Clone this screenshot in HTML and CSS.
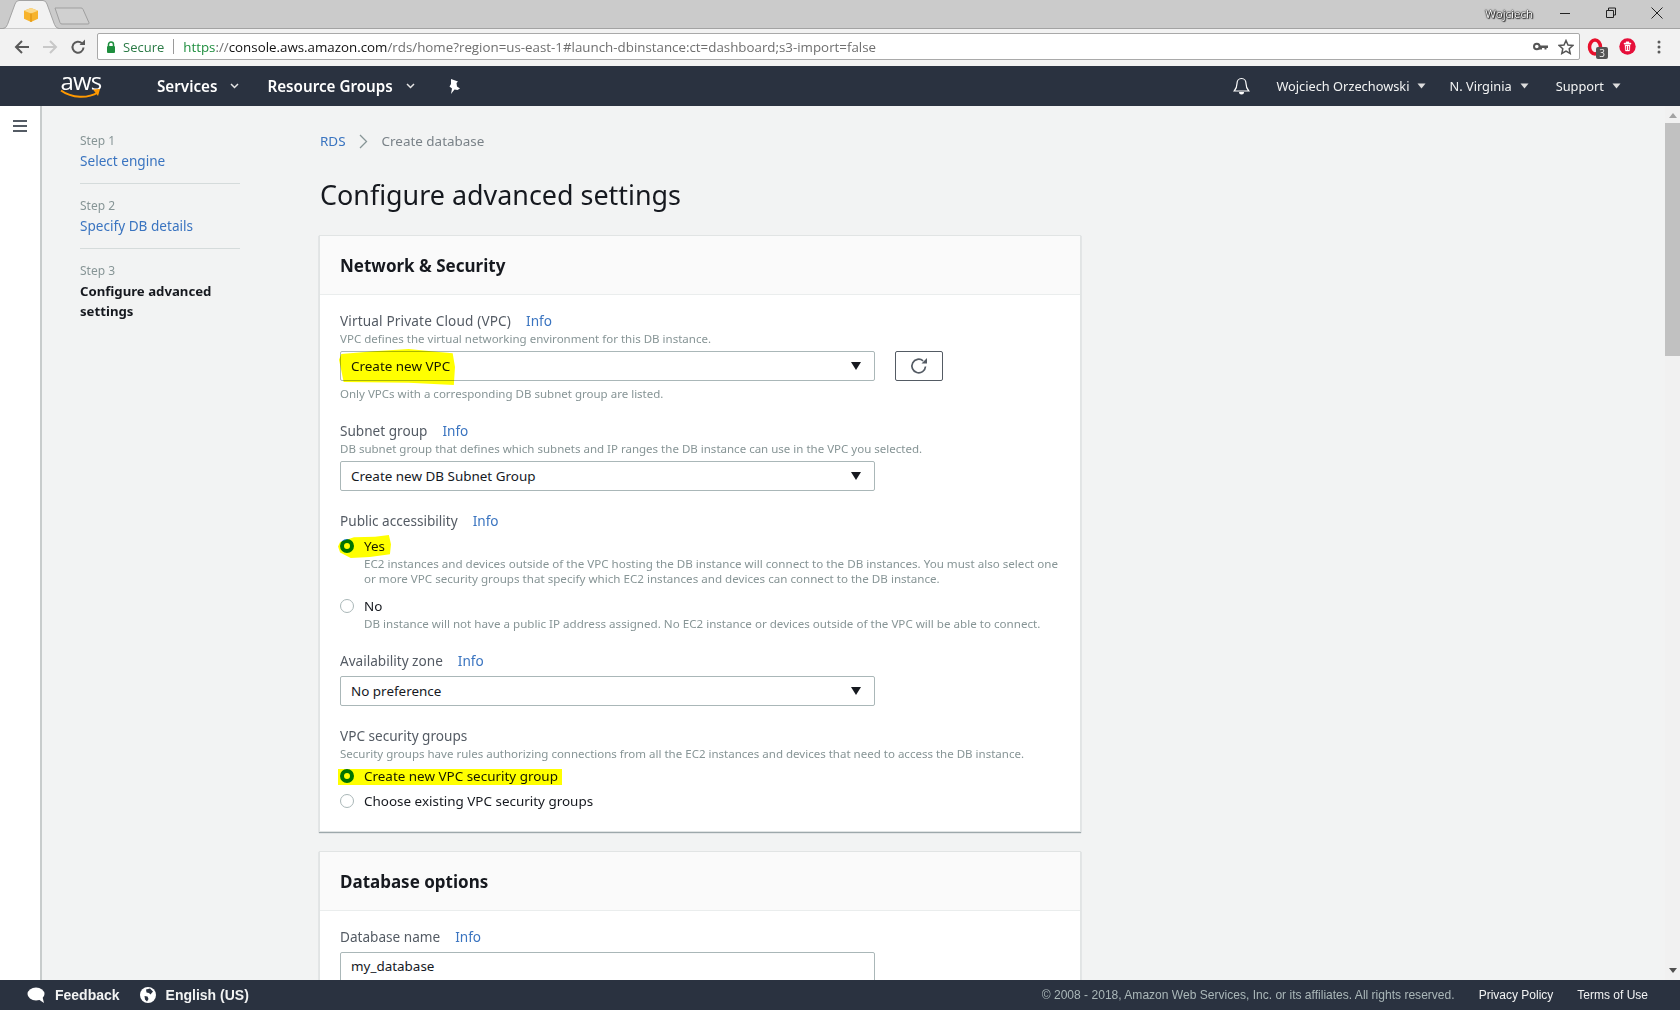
FILE: index.html
```html
<!DOCTYPE html>
<html lang="en">
<head>
<meta charset="utf-8">
<title>Configure advanced settings</title>
<link rel="stylesheet" href="styles.css">
</head>
<body>
<div class="app">
  <header class="tabstrip">
    <svg class="tabs" width="100" height="29" viewBox="0 0 100 29">
      <path d="M55 8h26a2 2 0 0 1 2 1.300l6 13.500a1 1 0 0 1-1 1.200H62a2 2 0 0 1-2-1.300L55 8z" fill="#d0d0d0" stroke="#9f9f9f"/>
      <path d="M0 28.500h3q3 0 4.500-4L15 4q1-3.500 4-3.500h24q3 0 4 3.500l7.500 20.500q1.500 4 4.500 4" fill="#f2f2f2" stroke="#a3a3a3"/>
      <path d="M31 8l7 2.800v8L31 22l-7-3.200v-8z" fill="#f7b32b"/>
      <path d="M24 10.800l7 2.600 7-2.600-7-2.800z" fill="#fbd98a"/>
      <path d="M31 13.400V22" stroke="#d98c0c" stroke-width="1"/>
    </svg>
    <div class="spacer"></div>
    <span class="profile">Wojciech</span>
    <div class="winbtns">
      <svg width="14" height="14" viewBox="0 0 14 14"><path d="M2 7.500h10" stroke="#222" fill="none"/></svg>
      <svg width="14" height="14" viewBox="0 0 14 14"><path d="M2.500 4.500h7v7h-7zM4.500 4.500v-2.500h7v7h-2" stroke="#222" fill="none"/></svg>
      <svg width="14" height="14" viewBox="0 0 14 14"><path d="M1.500 1.500l11 11M12.500 1.500l-11 11" stroke="#222" fill="none"/></svg>
    </div>
  </header>

  <div class="toolbar">
    <svg class="tool back" width="16" height="16" viewBox="0 0 16 16"><path d="M15 8H2M8 2L2 8l6 6" fill="none" stroke="#5a5a5a" stroke-width="2"/></svg>
    <svg class="tool fwd" width="16" height="16" viewBox="0 0 16 16"><path d="M1 8h13M8 2l6 6-6 6" fill="none" stroke="#c8c8c8" stroke-width="2"/></svg>
    <svg class="tool reload" width="16" height="16" viewBox="0 0 16 16"><path d="M13.500 8.500a5.500 5.500 0 1 1-1.600-4.200" fill="none" stroke="#5a5a5a" stroke-width="2"/><path d="M9.500 6H15V.5z" fill="#5a5a5a"/></svg>
    <div class="omnibox">
      <svg class="lock" width="10" height="12" viewBox="0 0 10 12"><path d="M2.500 5V3.500a2.500 2.500 0 0 1 5 0V5" fill="none" stroke="#1e8e3e" stroke-width="1.500"/><rect x="1" y="5" width="8" height="7" rx="1" fill="#1e8e3e"/></svg>
      <span class="secure">Secure</span>
      <span class="sep"></span>
      <span class="url"><span class="https">https</span><span class="dim">://</span>console.aws.amazon.com<span class="dim">/rds/home?region=us-east-1#launch-dbinstance:ct=dashboard;s3-import=false</span></span>
      <span class="spacer"></span>
      <svg class="key" width="15" height="9" viewBox="0 0 15 9"><circle cx="3.800" cy="4.500" r="2.800" fill="none" stroke="#555" stroke-width="2"/><path d="M6 3.500h9v2.500h-1.500v1.500h-2V6H9v1.500H6z" fill="#555"/></svg>
      <svg class="star" width="16" height="16" viewBox="0 0 16 16"><path d="M8 1.500l2 4.500 4.800.500-3.600 3.200 1 4.800L8 12.100 3.800 14.500l1-4.800L1.200 6.500 6 6z" fill="none" stroke="#555" stroke-width="1.500"/></svg>
    </div>
    <div class="exts">
      <div class="ext-o">
        <svg width="18" height="18" viewBox="0 0 18 18"><ellipse cx="8" cy="9" rx="5.500" ry="7" fill="none" stroke="#e8112d" stroke-width="3.500"/></svg>
        <span class="badge">3</span>
      </div>
      <svg class="ext-bin" width="17" height="17" viewBox="0 0 17 17"><circle cx="8.500" cy="8.500" r="8.200" fill="#e60f3a"/><path d="M5 5h7v1.200H5zM7 5V3.800h3V5M6 7h5l-.5 6h-4z" fill="#fff" stroke="#fff" stroke-width=".4"/><path d="M7.500 8v4M9.500 8v4" stroke="#e60f3a" stroke-width=".8"/></svg>
      <svg class="kebab" width="4" height="14" viewBox="0 0 4 14"><circle cx="2" cy="2" r="1.500" fill="#5a5a5a"/><circle cx="2" cy="7" r="1.500" fill="#5a5a5a"/><circle cx="2" cy="12" r="1.500" fill="#5a5a5a"/></svg>
    </div>
  </div>

  <nav class="topnav">
    <div class="logo">
      <span class="logo-text">aws</span>
      <svg class="smile" width="42" height="11" viewBox="0 0 42 11"><path d="M1 2.500c11 8 27 8 37 2" fill="none" stroke="#f90" stroke-width="2"/><path d="M33 1.500l7-.5-2 7z" fill="#f90"/></svg>
    </div>
    <a class="nav-main services">Services</a>
    <svg class="chev" width="9" height="6" viewBox="0 0 9 6"><path d="M1 1l3.500 3.500L8 1" fill="none" stroke="#e6e6e6" stroke-width="1.500"/></svg>
    <a class="nav-main groups">Resource Groups</a>
    <svg class="chev" width="9" height="6" viewBox="0 0 9 6"><path d="M1 1l3.500 3.500L8 1" fill="none" stroke="#e6e6e6" stroke-width="1.500"/></svg>
    <svg class="pin" width="13" height="15" viewBox="0 0 13 15"><path d="M3 0l7 2.500-1.500 1.500.5 3.500 3 2-2.500 1.500-3-.5L3 15l1-5.500L1.500 7.500 3 5z" fill="#fff"/></svg>
    <span class="spacer"></span>
    <svg class="bell" width="17" height="18" viewBox="0 0 17 18"><path d="M8.500 1.500c-3 0-4.500 2.500-4.500 5 0 4-1 5.500-2.800 7.500h14.600C14 12 13 10.500 13 6.500c0-2.500-1.500-5-4.500-5z" fill="none" stroke="#fff" stroke-width="1.200"/><path d="M6 15h5a2.500 2.500 0 0 1-5 0z" fill="#fff"/></svg>
    <a class="nav-sub name">Wojciech Orzechowski</a>
    <svg class="caret" width="9" height="6" viewBox="0 0 9 6"><path d="M.5 .5h8L4.500 5.500z" fill="#ddd"/></svg>
    <a class="nav-sub region">N. Virginia</a>
    <svg class="caret" width="9" height="6" viewBox="0 0 9 6"><path d="M.5 .5h8L4.500 5.500z" fill="#ddd"/></svg>
    <a class="nav-sub support">Support</a>
    <svg class="caret" width="9" height="6" viewBox="0 0 9 6"><path d="M.5 .5h8L4.500 5.500z" fill="#ddd"/></svg>
  </nav>

  <div class="content">
    <aside class="rail">
      <div class="burger"><i></i><i></i><i></i></div>
    </aside>
    <aside class="steps">
      <section class="step">
        <div class="step-no">Step 1</div>
        <a class="step-link">Select engine</a>
      </section>
      <section class="step">
        <div class="step-no">Step 2</div>
        <a class="step-link">Specify DB details</a>
      </section>
      <section class="step last">
        <div class="step-no">Step 3</div>
        <div class="step-cur">Configure advanced settings</div>
      </section>
    </aside>
    <main class="main">
      <div class="crumbs">
        <a class="link">RDS</a>
        <svg class="crumb-sep" width="9" height="15" viewBox="0 0 9 15"><path d="M1 1l6.500 6.500L1 14" fill="none" stroke="#879596" stroke-width="1.300"/></svg>
        <span>Create database</span>
      </div>
      <h1 class="title">Configure advanced settings</h1>

      <section class="panel">
        <h2 class="panel-head">Network &amp; Security</h2>
        <div class="panel-body">
          <div class="label"><span class="wide">Virtual Private Cloud (VPC)</span><a class="info">Info</a></div>
          <div class="desc">VPC defines the virtual networking environment for this DB instance.</div>
          <div class="field-row">
            <div class="select">
              <span>Create new VPC</span><i class="arrow"></i>
              <span class="marker m-vpc"></span>
            </div>
            <button class="refresh" type="button" aria-label="Refresh">
              <svg width="18" height="18" viewBox="0 0 18 18"><path d="M15.500 9.500a6.800 6.800 0 1 1-2.400-5.700" fill="none" stroke="#545b64" stroke-width="1.700"/><path d="M11.500 6.500h5.500V1z" fill="#545b64"/></svg>
            </button>
          </div>
          <div class="desc help">Only VPCs with a corresponding DB subnet group are listed.</div>

          <div class="label group tight">Subnet group<a class="info">Info</a></div>
          <div class="desc">DB subnet group that defines which subnets and IP ranges the DB instance can use in the VPC you selected.</div>
          <div class="select"><span>Create new DB Subnet Group</span><i class="arrow"></i></div>

          <div class="label group">Public accessibility<a class="info">Info</a></div>
          <div class="radio first">
            <i class="dot on"></i><span>Yes</span>
            <span class="marker m-yes"></span>
          </div>
          <div class="desc sub two">EC2 instances and devices outside of the VPC hosting the DB instance will connect to the DB instances. You must also select one or more VPC security groups that specify which EC2 instances and devices can connect to the DB instance.</div>
          <div class="radio no"><i class="dot"></i><span>No</span></div>
          <div class="desc sub">DB instance will not have a public IP address assigned. No EC2 instance or devices outside of the VPC will be able to connect.</div>

          <div class="label group tight">Availability zone<a class="info">Info</a></div>
          <div class="select mt5"><span>No preference</span><i class="arrow"></i></div>

          <div class="label group">VPC security groups</div>
          <div class="desc">Security groups have rules authorizing connections from all the EC2 instances and devices that need to access the DB instance.</div>
          <div class="radio sg">
            <i class="dot on"></i><span>Create new VPC security group</span>
            <span class="marker m-sg"></span>
          </div>
          <div class="radio sg2"><i class="dot"></i><span>Choose existing VPC security groups</span></div>
        </div>
      </section>

      <section class="panel second">
        <h2 class="panel-head">Database options</h2>
        <div class="panel-body">
          <div class="label">Database name<a class="info">Info</a></div>
          <div class="select mt5 input"><span>my_database</span></div>
        </div>
      </section>
    </main>
    <div class="scrollbar">
      <i class="sb-up"></i>
      <div class="sb-thumb"></div>
      <span class="spacer"></span>
      <i class="sb-down"></i>
    </div>
  </div>

  <footer class="footer">
    <svg class="f-ico" width="18" height="16" viewBox="0 0 18 16"><ellipse cx="9" cy="7" rx="8.500" ry="6.500" fill="#fff"/><path d="M11 12l6 4-1.500-6z" fill="#fff"/></svg>
    <a class="f-bold feedback">Feedback</a>
    <svg class="f-ico globe" width="16" height="16" viewBox="0 0 16 16"><circle cx="8" cy="8" r="8" fill="#fff"/><path d="M6 2.500l4-1 3 3-2.500 3-1.500-1.500-2.500-.5zM4.500 9l3 .5 1 2.500-1.500 2.500-2-2z" fill="#2a3240"/></svg>
    <a class="f-bold">English (US)</a>
    <span class="spacer"></span>
    <span class="copy">© 2008 - 2018, Amazon Web Services, Inc. or its affiliates. All rights reserved.</span>
    <a class="f-link privacy">Privacy Policy</a>
    <a class="f-link terms">Terms of Use</a>
  </footer>
</div>
</body>
</html>
```

FILE: styles.css
```css
* { box-sizing: border-box; }
html, body { margin: 0; height: 100%; overflow: hidden; }
body { font-family: "Noto Sans", sans-serif; font-size: 14px; color: #16191f; background: #f2f3f3; }
.app { height: 1010px; width: 1680px; display: flex; flex-direction: column; overflow: hidden; }
.spacer { flex: 1; }
a { text-decoration: none; }

.tabstrip { height: 29px; flex: none; background: #cbcbcb; display: flex; align-items: flex-start; border-bottom: 1px solid #a3a3a3; position: relative; }
.tabs { position: absolute; left: 0; top: 0; }
.profile { font: 11.500px/28px "Open Sans", sans-serif; color: #fff; margin-right: 25px; text-shadow: 0 0 1px #111, 0 0 1px #111, 0 0 2px #222, 1px 1px 1px #333; }
.winbtns { display: flex; gap: 32px; margin-right: 16px; padding-top: 6px; }

.toolbar { height: 37px; flex: none; background: #f2f2f2; display: flex; align-items: center; padding-bottom: 2px; }
.tool { flex: none; }
.back { margin-left: 14px; }
.fwd { margin-left: 12px; }
.reload { margin-left: 12px; }
.omnibox { width: 1483px; height: 27px; margin-left: 11px; background: #fff; border: 1px solid #a9a9a9; border-radius: 2px; display: flex; align-items: center; }
.lock { margin-left: 8px; flex: none; }
.secure { font: 13px "Open Sans", sans-serif; color: #2a7a45; margin-left: 7px; }
.sep { width: 1px; height: 15px; background: #9a9a9a; margin: 0 9px 0 9px; }
.url { font: 13.330px "Open Sans", sans-serif; color: #111; white-space: nowrap; }
.https { color: #1e8e3e; }
.dim { color: #6f6f6f; }
.key { margin-right: 10px; }
.star { margin-right: 5px; }
.exts { display: flex; align-items: center; }
.ext-o { position: relative; width: 18px; height: 18px; margin-left: 7px; }
.ext-o svg { display: block; }
.badge { position: absolute; left: 9px; top: 9px; width: 12px; height: 12px; background: #555; color: #eee; font: 10px/12px "Open Sans", sans-serif; text-align: center; border-radius: 2px; }
.ext-bin { margin-left: 14px; }
.kebab { margin-left: 21px; }

.topnav { height: 40px; flex: none; background: #2a3240; display: flex; align-items: center; color: #fff; }
.logo { width: 42px; margin-left: 60px; height: 32px; position: relative; }
.logo-text { display: block; font: 400 24px/21px "Open Sans", sans-serif; color: #fff; text-align: center; letter-spacing: -.8px; }
.smile { position: absolute; left: 0; top: 18px; }
.nav-main { font-size: 15.200px; font-weight: 600; color: #fff; }
.services { margin-left: 55px; }
.chev { margin-left: 13px; }
.groups { margin-left: 28px; }
.pin { margin-left: 33px; }
.bell { margin-right: 26px; }
.nav-sub { font-size: 12.800px; color: #f2f3f3; }
.caret { margin-left: 8px; }
.region { margin-left: 23px; }
.support { margin-left: 27px; }
.caret:last-child { margin-right: 59px; }

.content { height: 874px; flex: none; display: flex; overflow: hidden; }
.rail { width: 42px; flex: none; background: #fff; border-right: 2px solid #c8cccc; padding: 14px 13px; }
.burger { display: flex; flex-direction: column; gap: 3px; width: 14px; }
.burger i { height: 2px; background: #545b64; display: block; }
.steps { width: 278px; flex: none; padding: 25px 0 0 38px; }
.step { width: 160px; height: 53px; border-bottom: 1px solid #d5dbdb; margin-bottom: 12px; line-height: 20px; }
.step.last { border: 0; height: auto; }
.step-no { font-size: 12px; color: #879596; }
.step-link { color: #3a74c0; font-size: 13.600px; display: block; }
.step-cur { font-size: 13.200px; font-weight: 700; color: #16191f; }

.main { width: 762px; flex: none; padding-top: 25px; }
.crumbs { display: flex; align-items: center; height: 20px; color: #7a8288; font-size: 13.450px; }
.link, .info { color: #3a74c0; }
.crumb-sep { margin: 0 14px 0 13px; }
.title { font-size: 26.900px; line-height: 36px; font-weight: 400; margin: 26px 0 23px; color: #16191f; }
.panel { background: #fff; box-shadow: 0 0 0 1px #e1e4e4, 0 1px 1px 1px rgba(0,28,36,.35); width: 760px; }
.second { margin-top: 21px; }
.panel-head { margin: 0; height: 59px; background: #fafafa; border-bottom: 1px solid #eaeded; padding: 0 20px; font-size: 17px; line-height: 59px; font-weight: 700; }
.panel-body { padding: 16px 20px 20px; }
.label { font-size: 13.600px; line-height: 20px; color: #545b64; }
.wide { letter-spacing: .15px; }
.label.group { margin-top: 20px; }
.label.tight { margin-top: 19px; }
.info { margin-left: 15px; }
.desc { font-size: 11.530px; line-height: 16px; color: #879596; }
.help { margin-top: 5px; }
.field-row { display: flex; gap: 20px; }
.select { position: relative; width: 535px; height: 30px; background: #fff; border: 1px solid #aab7b8; border-radius: 2px; margin-top: 4px; padding: 0 10px; line-height: 29px; font-size: 13.450px; color: #16191f; }
.select.mt5 { margin-top: 5px; }
.select.input { line-height: 27px; }
.arrow { position: absolute; right: 13px; top: 10px; width: 0; height: 0; border: 5.500px solid transparent; border-top: 8px solid #16191f; border-bottom: 0; }
.refresh { width: 48px; height: 30px; margin-top: 4px; padding: 0; background: #fff; border: 1px solid #545b64; border-radius: 2px; display: flex; align-items: center; justify-content: center; }
.radio { position: relative; display: flex; align-items: center; height: 20px; line-height: 18px; font-size: 13.450px; color: #16191f; }
.radio span:first-of-type { margin-left: 10px; padding-bottom: 1px; }
.radio.first { margin-top: 5px; }
.radio.no { margin-top: 10px; }
.radio.sg { margin-top: 4px; }
.radio.sg2 { margin-top: 5px; }
.dot { width: 14px; height: 14px; border-radius: 50%; border: 1px solid #aab7b8; background: #fff; flex: none; }
.dot.on { border: 4px solid #0073bb; }
.sub { margin-left: 24px; font-size: 11.620px; }
.two { line-height: 15px; }
.marker { position: absolute; background: #ffff00; mix-blend-mode: multiply; pointer-events: none; margin: 0 !important; padding: 0 !important; }
.m-vpc { left: -2px; top: -3px; width: 116px; height: 36px; clip-path: polygon(2% 14%, 30% 6%, 60% 0, 86% 8%, 98% 12%, 100% 50%, 99% 100%, 60% 94%, 4% 92%, 2% 60%, 0 30%); }
.m-yes { left: -2px; top: -1px; width: 53px; height: 23px; clip-path: polygon(4% 30%, 30% 10%, 70% 8%, 96% 0, 100% 40%, 98% 84%, 60% 96%, 24% 100%, 4% 76%, 0 50%); }
.m-sg { left: -2px; top: 3px; width: 224px; height: 16px; }

.scrollbar { width: 15px; flex: none; margin-left: auto; background: #f1f1f1; display: flex; flex-direction: column; align-items: center; padding: 7px 0; }
.sb-up { width: 0; height: 0; border: 4px solid transparent; border-bottom: 5px solid #a3a3a3; border-top: 0; }
.sb-thumb { width: 15px; height: 233px; background: #c1c1c1; margin-top: 5px; }
.sb-down { width: 0; height: 0; border: 4px solid transparent; border-top: 5px solid #505050; border-bottom: 0; }

.footer { height: 30px; flex: none; background: #2a3240; display: flex; align-items: center; color: #fff; font-family: "Liberation Sans", sans-serif; }
.f-ico { margin-left: 27px; }
.globe { margin-left: 20px; }
.f-bold { font-weight: 700; font-size: 14px; color: #f2f3f3; margin-left: 10px; }
.copy { font-size: 12.060px; color: #aab7b8; }
.f-link { font-size: 12px; color: #f2f3f3; }
.privacy { margin-left: 24px; }
.terms { margin-left: 24px; margin-right: 32px; }
```
